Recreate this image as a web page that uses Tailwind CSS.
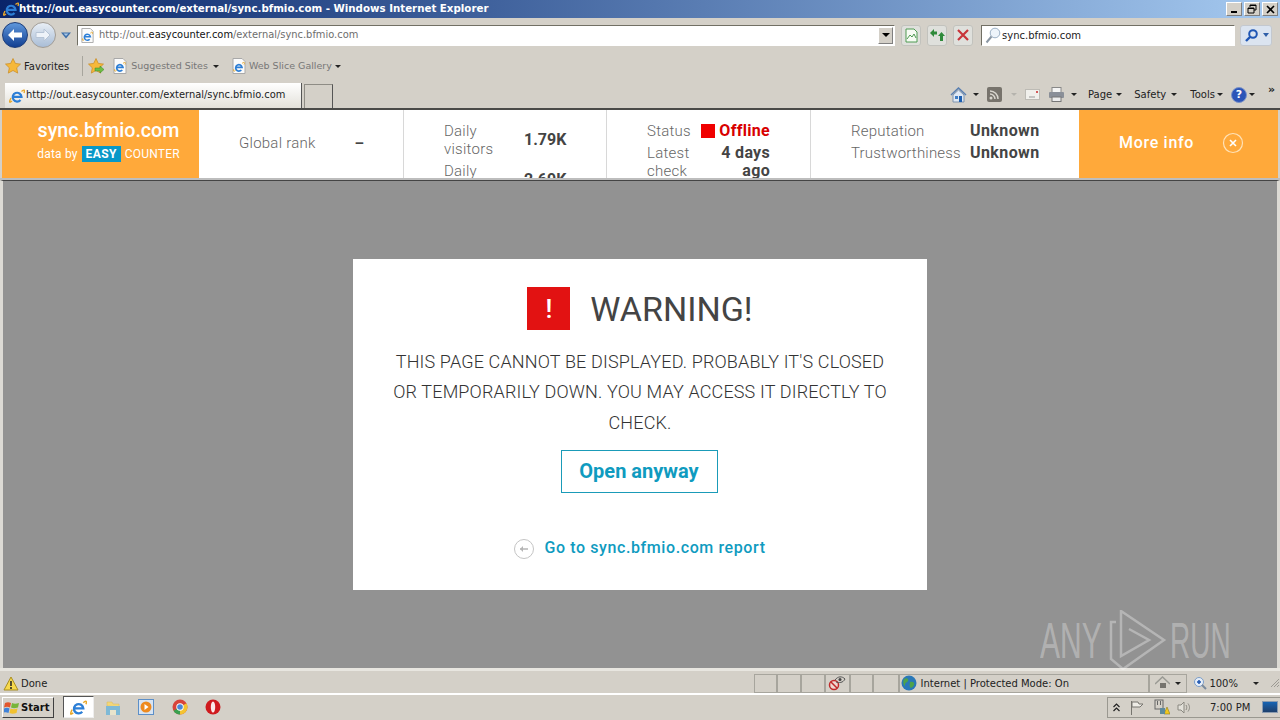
<!DOCTYPE html>
<html>
<head>
<meta charset="utf-8">
<script src="https://cdn.jsdelivr.net/npm/@tailwindcss/browser@4"></script>
</head>
<body class="m-0 overflow-hidden">
<div class="relative w-[1280px] h-[720px] flex flex-col bg-[#d4d0c8] overflow-hidden font-['Liberation_Sans',sans-serif] text-[11px] text-black">

<!-- title bar -->
<div class="h-[18px] shrink-0 flex items-center bg-gradient-to-r from-[#0a246a] to-[#a6caf0] pl-[3px] pr-[2px]">
  <svg class="w-[16px] h-[16px] shrink-0" viewBox="0 0 16 16"><use href="#ie"/></svg>
  <span class="font-['DejaVu_Sans',sans-serif] font-bold text-[10.250px] text-white whitespace-nowrap">http://out.easycounter.com/external/sync.bfmio.com - Windows Internet Explorer</span>
  <div class="ml-auto flex gap-[2px]">
    <div class="w-[16px] h-[14px] bg-[#d4d0c8] border border-[#808080] border-t-white border-l-white flex items-end justify-center pb-[2px]"><div class="w-[6px] h-[2px] bg-black"></div></div>
    <div class="w-[16px] h-[14px] bg-[#d4d0c8] border border-[#808080] border-t-white border-l-white flex items-center justify-center"><svg class="w-[10px] h-[10px]" viewBox="0 0 10 10" fill="none" stroke="#000"><path d="M3 3V1h6v5H7M1 4h6v5H1z"/><path d="M3 1.500h6M1 4.500h6"/></svg></div>
    <div class="w-[16px] h-[14px] bg-[#d4d0c8] border border-[#808080] border-t-white border-l-white flex items-center justify-center"><svg class="w-[9px] h-[9px]" viewBox="0 0 9 9" stroke="#000" stroke-width="1.600"><path d="M1 1l7 7M8 1L1 8"/></svg></div>
  </div>
</div>

<!-- address row -->
<div class="h-[32px] shrink-0 flex items-center pt-[2px]">
  <div class="ml-[2px] w-[26px] h-[26px] rounded-full bg-gradient-to-b from-[#5f97dc] to-[#123f92] border border-[#1c3c78] flex items-center justify-center">
    <svg class="w-[16px] h-[14px]" viewBox="0 0 16 14"><path d="M1 7l6-6v3.500h8v5H7V13z" fill="#fff"/></svg>
  </div>
  <div class="ml-[2px] w-[26px] h-[26px] rounded-full bg-gradient-to-b from-[#e8eef5] to-[#a9bdd6] border border-[#a29d96] flex items-center justify-center">
    <svg class="w-[16px] h-[14px]" viewBox="0 0 16 14"><path d="M15 7L9 1v3.500H1v5h8V13z" fill="#eef3f9" stroke="#b6c4d6"/></svg>
  </div>
  <svg class="ml-[5px] w-[10px] h-[7px]" viewBox="0 0 10 7"><path d="M0 .5h10L5 6.500z" fill="#3d6ea8"/><path d="M2.500 1.500h5L5 4z" fill="#a9c8e8"/></svg>
  <div class="ml-[6px] w-[818px] h-[21px] bg-white border border-[#716f64] border-r-white border-b-white flex items-center relative">
    <div class="w-[18px] h-[17px] shrink-0 flex items-center justify-center"><svg class="w-[15px] h-[15px]" viewBox="0 0 16 16"><use href="#iepage"/></svg></div>
    <span class="ml-[3px] mt-[1px] font-['DejaVu_Sans',sans-serif] text-[9.900px] text-[#6d6d6d] whitespace-nowrap">http://out.<span class="text-[#111]">easycounter.com</span>/external/sync.bfmio.com</span>
    <div class="ml-auto mr-[1px] w-[15px] h-[17px] bg-[#d4d0c8] border border-[#808080] border-t-white border-l-white flex items-center justify-center"><div class="w-0 h-0 border-x-[4px] border-x-transparent border-t-[4px] border-t-black"></div></div>
  </div>
  <div class="ml-[6px] w-[20px] h-[21px] rounded-[3px] bg-[#dfe0dc] border border-[#c2c2bd] flex items-center justify-center"><svg class="w-[13px] h-[15px]" viewBox="0 0 13 15" fill="#f6fbf3" stroke="#4e9a52"><path d="M1 1h8l3 3v10H1z"/><path d="M2 11l3-4 2 2 2-3 2 4" fill="none"/></svg></div>
  <div class="ml-[6px] w-[20px] h-[21px] rounded-[3px] bg-[#dfe0dc] border border-[#c2c2bd] flex items-center justify-center"><svg class="w-[15px] h-[13px]" viewBox="0 0 15 13" fill="#2f8a3a"><path d="M0 4l4-4v2.500h3v3H4V8z"/><path d="M15 7l-3.500-4L8 7h2v5h3V7z"/></svg></div>
  <div class="ml-[6px] w-[20px] h-[21px] rounded-[3px] bg-[#dfe0dc] border border-[#c2c2bd] flex items-center justify-center"><svg class="w-[12px] h-[12px]" viewBox="0 0 12 12" stroke="#c8343a" stroke-width="2.200"><path d="M1 1l10 10M11 1L1 11"/></svg></div>
  <div class="ml-[8px] w-[254px] h-[21px] bg-white border border-[#716f64] border-r-white border-b-white flex items-center">
    <svg class="ml-[3px] w-[16px] h-[17px]" viewBox="0 0 16 17" fill="none"><circle cx="10" cy="6" r="4.800" fill="#eef4fa" stroke="#9db1c6"/><path d="M6.500 9.500L1.500 15.500" stroke="#8b97a4" stroke-width="2"/></svg>
    <span class="ml-[1px] mt-[1px] font-['DejaVu_Sans',sans-serif] text-[10px] text-[#222] whitespace-nowrap">sync.bfmio.com</span>
  </div>
  <div class="ml-[5px] w-[32px] h-[21px] rounded-[3px] bg-[#dbe4f0] border border-[#c3c8cf] flex items-center">
    <svg class="ml-[3px] w-[15px] h-[15px]" viewBox="0 0 15 15" fill="none"><circle cx="9" cy="6" r="3.800" stroke="#1f56b4" stroke-width="2"/><path d="M6 9l-4 4" stroke="#1f56b4" stroke-width="2.400"/></svg>
    <svg class="ml-[4px] w-[6px] h-[4px]" viewBox="0 0 6 4"><path d="M0 0h6L3 4z" fill="#2f5fa8"/></svg>
  </div>
</div>

<!-- favorites row -->
<div class="h-[33px] shrink-0 flex items-center pt-[1px] pb-[2px]">
  <svg class="ml-[5px] w-[16px] h-[16px]" viewBox="0 0 16 16"><use href="#star"/></svg>
  <span class="ml-[3px] font-['DejaVu_Sans',sans-serif] text-[10px] text-[#222]">Favorites</span>
  <div class="ml-[13px] w-px h-[20px] bg-[#a7a59d]"></div>
  <div class="ml-[5px] relative w-[17px] h-[16px]"><svg class="w-[17px] h-[16px]" viewBox="0 0 17 16"><use href="#star"/><path d="M7 10h5V8l4 3.500-4 3.500v-2H7z" fill="#6ebd44" stroke="#3e8a25" stroke-width=".5"/></svg></div>
  <svg class="ml-[7px] w-[16px] h-[16px]" viewBox="0 0 16 16"><use href="#iepage"/></svg>
  <span class="ml-[3px] font-['DejaVu_Sans',sans-serif] text-[9.500px] text-[#777]">Suggested Sites</span>
  <div class="ml-[5px] w-0 h-0 border-x-[3px] border-x-transparent border-t-[3px] border-t-[#222]"></div>
  <svg class="ml-[12px] w-[16px] h-[16px]" viewBox="0 0 16 16"><use href="#iepage"/></svg>
  <span class="ml-[2px] font-['DejaVu_Sans',sans-serif] text-[9.500px] text-[#777]">Web Slice Gallery</span>
  <div class="ml-[3px] w-0 h-0 border-x-[3px] border-x-transparent border-t-[3px] border-t-[#222]"></div>
</div>

<!-- tabs row -->
<div class="h-[25px] shrink-0 flex items-stretch">
  <div class="ml-[5px] w-[297px] bg-gradient-to-b from-white to-[#e3e1da] flex items-center border-r border-[#555]">
    <svg class="ml-[4px] w-[16px] h-[16px]" viewBox="0 0 16 16"><use href="#ie"/></svg>
    <span class="ml-[1px] font-['DejaVu_Sans',sans-serif] text-[9.900px] text-[#222] whitespace-nowrap">http://out.easycounter.com/external/sync.bfmio.com</span>
  </div>
  <div class="ml-[2px] mt-[1px] w-[29px] border border-b-0 border-[#8e8c85] border-r-[#555]"></div>
  <div class="ml-auto flex items-center pb-[2px] font-['DejaVu_Sans',sans-serif] text-[10px] text-[#222] pr-[5px]">
    <svg class="w-[17px] h-[16px]" viewBox="0 0 17 16"><path d="M1 8l7.500-7L16 8" fill="none" stroke="#5a7fb0" stroke-width="1.500"/><path d="M3 8v7h11V8L8.500 3z" fill="#dfe8f4" stroke="#7e94ad"/><rect x="9" y="9" width="3" height="6" fill="#1d5fb0"/><rect x="5" y="9" width="3" height="3" fill="#3f7dc4"/></svg>
    <div class="ml-[6px] w-0 h-0 border-x-[3px] border-x-transparent border-t-[3px] border-t-[#222]"></div>
    <svg class="ml-[8px] w-[15px] h-[15px]" viewBox="0 0 15 15"><rect width="15" height="15" rx="2" fill="#77736c"/><circle cx="4" cy="11" r="1.500" fill="#d9d6cf"/><path d="M3 7a5 5 0 015 5M3 4a8 8 0 018 8" stroke="#d9d6cf" stroke-width="1.500" fill="none"/></svg>
    <div class="ml-[9px] w-0 h-0 border-x-[3px] border-x-transparent border-t-[3px] border-t-[#b5b3ad]"></div>
    <svg class="ml-[8px] w-[15px] h-[11px]" viewBox="0 0 15 11"><rect x=".5" y=".5" width="14" height="10" fill="#f1f0ec" stroke="#bdbbb5"/><rect x="11" y="2" width="2" height="2" fill="#d45a5a"/><path d="M4 8h6" stroke="#999"/></svg>
    <svg class="ml-[8px] w-[17px] h-[15px]" viewBox="0 0 17 15"><rect x="4" y="0.500" width="9" height="5" fill="#f5f5f5" stroke="#888"/><rect x="1" y="5" width="15" height="6" rx="1" fill="#8a8f98"/><rect x="4" y="10" width="9" height="4.500" fill="#eee" stroke="#777"/></svg>
    <div class="ml-[6px] w-0 h-0 border-x-[3px] border-x-transparent border-t-[3px] border-t-[#222]"></div>
    <span class="ml-[11px]">Page</span><div class="ml-[4px] w-0 h-0 border-x-[3px] border-x-transparent border-t-[3px] border-t-[#222]"></div>
    <span class="ml-[12px]">Safety</span><div class="ml-[5px] w-0 h-0 border-x-[3px] border-x-transparent border-t-[3px] border-t-[#222]"></div>
    <span class="ml-[13px]">Tools</span><div class="ml-[2px] w-0 h-0 border-x-[3px] border-x-transparent border-t-[3px] border-t-[#222]"></div>
    <div class="ml-[8px] w-[16px] h-[16px] rounded-full bg-[#2c55b8] border border-[#7c93c8] flex items-center justify-center text-[11px] font-bold text-white leading-none">?</div>
    <div class="ml-[2px] w-0 h-0 border-x-[3px] border-x-transparent border-t-[3px] border-t-[#222]"></div>
    <span class="ml-[13px] -mt-[11px] text-[11px] font-bold leading-none">»</span>
  </div>
</div>

<!-- dark edge -->
<div class="h-[2px] shrink-0 bg-[#4a4a48]"></div>

<!-- counter banner -->
<div class="h-[68px] shrink-0 ml-[2px] mr-[2px] bg-white flex items-stretch overflow-hidden font-['Roboto',sans-serif] text-[#808080]">
  <div class="w-[197px] shrink-0 bg-[#ffa93a] text-white flex flex-col items-center justify-start pt-[10px] pl-[16px]">
    <div class="text-[19.700px] font-medium leading-[22px] whitespace-nowrap">sync.bfmio.com</div>
    <div class="text-[12px] leading-[16px] mt-[4px] flex items-center whitespace-nowrap tracking-[0.2px]">data by<span class="ml-[4px] mr-[4px] w-[39px] text-center bg-[#0898c8] font-bold tracking-[0.4px] text-[12px] leading-[16px]">EASY</span>COUNTER</div>
  </div>
  <div class="w-[205px] shrink-0 border-r border-[#d8d8d8] flex items-center pb-[2px] text-[15px]">
    <span class="ml-[40px] font-light tracking-[0.25px] text-[#666]">Global rank</span>
    <span class="ml-[39px] font-bold text-[#444]">–</span>
  </div>
  <div class="w-[203px] shrink-0 border-r border-[#d8d8d8] pl-[40px] pt-[12px] text-[15px] leading-[18px]">
    <div class="flex items-center"><span class="w-[80px] font-light tracking-[0.25px] text-[#666]">Daily<br>visitors</span><span class="text-[16px] font-bold text-[#444]">1.79K</span></div>
    <div class="flex items-center mt-[4px]"><span class="w-[80px] font-light tracking-[0.25px] text-[#666]">Daily<br>pageviews</span><span class="text-[16px] font-bold text-[#444]">2.69K</span></div>
  </div>
  <div class="w-[204px] shrink-0 border-r border-[#d8d8d8] pl-[40px] pt-[12px] text-[15px] leading-[18px]">
    <div class="flex items-center w-[123px] justify-between"><span class="font-light tracking-[0.25px] text-[#666]">Status</span><span class="flex items-center text-[16px] font-bold tracking-[0.3px] text-[#d80000]"><span class="w-[14px] h-[14px] bg-[#f00000] mr-[4px]"></span>Offline</span></div>
    <div class="flex w-[123px] justify-between mt-[4px]"><span class="font-light tracking-[0.25px] text-[#666]">Latest<br>check</span><span class="text-[16px] font-bold tracking-[0.3px] text-[#444] text-right">4 days<br>ago</span></div>
  </div>
  <div class="w-[268px] shrink-0 pl-[40px] pt-[12px] text-[15px] leading-[18px]">
    <div class="flex"><span class="w-[119px] font-light tracking-[0.2px] text-[#666]">Reputation</span><span class="text-[16px] font-bold tracking-[0.4px] text-[#444]">Unknown</span></div>
    <div class="flex mt-[4px]"><span class="w-[119px] font-light tracking-[0.2px] text-[#666]">Trustworthiness</span><span class="text-[16px] font-bold tracking-[0.4px] text-[#444]">Unknown</span></div>
  </div>
  <div class="flex-1 bg-[#ffa93a] text-white flex items-center pb-[2px]">
    <span class="ml-[40px] text-[16px] font-medium tracking-[0.7px]">More info</span>
    <svg class="ml-[28px] w-[22px] h-[22px]" viewBox="0 0 22 22" fill="none"><circle cx="11" cy="11" r="9.500" stroke="#ffe2b8" stroke-width="1.200"/><path d="M8 8l6 6M14 8l-6 6" stroke="#fff" stroke-width="1.600"/></svg>
  </div>
</div>

<!-- separator -->
<div class="h-[2px] shrink-0 bg-[#bdbdbd]"></div>

<!-- page -->
<div class="flex-1 min-h-0 border-l-[3px] border-r-[3px] border-t border-l-[#dcdad4] border-r-[#dcdad4] border-t-[#444] bg-[#929292] flex items-start justify-center pt-[78px]">
  <div class="w-[574px] h-[331px] bg-white flex flex-col items-center font-['Roboto',sans-serif] text-[#444]">
    <div class="mt-[27px] flex items-center">
      <div class="w-[43px] h-[43px] bg-[#e21212] flex items-center justify-center text-white text-[26px] font-medium leading-none">!</div>
      <div class="ml-[20px] pt-[2px] text-[34px] leading-[43px]">WARNING!</div>
    </div>
    <p class="mt-[15.500px] w-[505px] text-center text-[18px] font-light tracking-[0.15px] leading-[30.500px] text-[#333]">THIS PAGE CANNOT BE DISPLAYED. PROBABLY IT'S CLOSED OR TEMPORARILY DOWN. YOU MAY ACCESS IT DIRECTLY TO CHECK.</p>
    <div class="mt-[12px] mr-[2px] w-[157px] h-[43px] border border-[#1a9bb8] flex items-center justify-center pb-[2px] text-[#0f9bbf] text-[20px] font-bold">Open anyway</div>
    <div class="mt-[43px] flex items-center">
      <svg class="w-[20px] h-[20px]" viewBox="0 0 20 20" fill="none"><circle cx="10" cy="10" r="9.500" stroke="#c4c4c4"/><path d="M6 10h8" stroke="#b5b5b5" stroke-width="1.500"/><path d="M9 7l-3 3 3 3z" fill="#b5b5b5"/></svg>
      <span class="ml-[10px] pb-[1px] text-[16px] font-medium tracking-[0.6px] text-[#0f9bbf]">Go to sync.bfmio.com report</span>
    </div>
  </div>
</div>

<!-- status bar -->
<div class="h-[27px] shrink-0 border-t-[3px] border-b-[2px] border-t-[#e8e6e0] border-b-white bg-[#d4d0c8] flex items-center pt-[2px]">
  <svg class="ml-[3px] w-[16px] h-[15px]" viewBox="0 0 16 15"><path d="M8 1l7 13H1z" fill="#f7d94c" stroke="#a88d1e"/><path d="M8 5v5M8 11v2" stroke="#222" stroke-width="1.500"/></svg>
  <span class="ml-[2px] w-[733px] font-['DejaVu_Sans',sans-serif] text-[10px] text-[#222]">Done</span>
  <div class="w-[23px] h-[19px] border border-[#a7a59d]"></div>
  <div class="w-[24px] h-[19px] border border-[#a7a59d]"></div>
  <div class="w-[24px] h-[19px] border border-[#a7a59d]"></div>
  <div class="w-[25px] h-[19px] border border-[#a7a59d] flex items-center justify-center"><svg class="w-[18px] h-[16px]" viewBox="0 0 18 16" fill="none"><circle cx="6" cy="10" r="4.500" fill="#f0d8d0" stroke="#c02a2a" stroke-width="1.500"/><path d="M3 7l6 6" stroke="#c02a2a" stroke-width="1.500"/><path d="M7 5c3-4 7-4 10-1-2 4-6 4-9 3" stroke="#555"/><circle cx="12" cy="4.500" r="1.500" fill="#444"/></svg></div>
  <div class="w-[23px] h-[19px] border border-[#a7a59d]"></div>
  <div class="w-[26px] h-[19px] border border-[#a7a59d]"></div>
  <div class="w-[251px] h-[19px] border border-[#a7a59d] flex items-center font-['DejaVu_Sans',sans-serif] text-[10px] text-[#222] whitespace-nowrap">
    <svg class="ml-[1px] w-[16px] h-[16px]" viewBox="0 0 16 16"><circle cx="8" cy="8" r="7.500" fill="#2a78b8"/><path d="M3 4c3-2 5 0 4 2s-3 1-3 4-3-2-1-6zM9 7c3-1 5 1 4 3s-3 4-4 2 0-3 0-5z" fill="#4fa34a"/></svg>
    <span class="ml-[4px]">Internet | Protected Mode: On</span>
  </div>
  <div class="w-[38px] h-[19px] border border-[#a7a59d] flex items-center">
    <svg class="ml-[5px] w-[15px] h-[15px]" viewBox="0 0 15 15"><path d="M0 8l7.500-7L15 8" fill="none" stroke="#9a9a94" stroke-width="1.500"/><rect x="5" y="7" width="6" height="5" fill="#76746e"/></svg>
    <div class="ml-[5px] w-0 h-0 border-x-[3px] border-x-transparent border-t-[3px] border-t-[#222]"></div>
  </div>
  <div class="flex-1 h-[19px] flex items-center font-['DejaVu_Sans',sans-serif] text-[10px] text-[#222] relative">
    <svg class="ml-[6px] w-[15px] h-[15px]" viewBox="0 0 15 15" fill="none"><circle cx="6" cy="6" r="4.500" fill="#e6eef8" stroke="#7a9cc8"/><path d="M4 6h4M6 4v4" stroke="#1e55b0" stroke-width="1.500"/><path d="M9 9l4 4" stroke="#7a8a9c" stroke-width="2"/></svg>
    <span class="ml-[1px]">100%</span>
    <div class="ml-[15px] w-0 h-0 border-x-[3px] border-x-transparent border-t-[3px] border-t-[#222]"></div>
    <svg class="ml-[11px] w-[10px] h-[10px]" viewBox="0 0 10 10" stroke="#9c9a93"><path d="M9 1L1 9M9 4L4 9M9 7L7 9"/></svg>
  </div>
</div>

<!-- taskbar -->
<div class="h-[25px] shrink-0 bg-[#d4d0c8] flex items-center pb-[1px]">
  <div class="ml-[2px] w-[52px] h-[21px] bg-[#d4d0c8] border border-[#404040] border-t-white border-l-white flex items-center">
    <svg class="ml-[1px] w-[16px] h-[15px]" viewBox="0 0 16 15"><path d="M1 3c2-1 4-1 6 0l-1 4.500c-2-1-4-1-6 0z" fill="#e2562c"/><path d="M8 3c2 1 4 1 7 0l-1 4.500c-3 1-5 1-7 0z" fill="#77b53a"/><path d="M0 8.500c2-1 4-1 5.500 0L4.500 13c-2-1-4-1-5.500 0z" fill="#3f82d8"/><path d="M6.500 8.500c2 1 4 1 7 0L12.500 13c-3 1-5 1-7 0z" fill="#f1c12f"/></svg>
    <span class="ml-[1px] font-['DejaVu_Sans',sans-serif] font-bold text-[10px] text-[#111]">Start</span>
  </div>
  <div class="ml-[9px] w-[31px] h-[22px] bg-white border border-[#555] border-r-[#eee] border-b-[#eee] flex items-center justify-center"><svg class="w-[17px] h-[17px]" viewBox="0 0 16 16"><use href="#ie"/></svg></div>
  <svg class="ml-[11px] w-[16px] h-[17px]" viewBox="0 0 16 17"><path d="M2 7V3h5l1 2h6v3z" fill="#f2d679" stroke="#d9b858" stroke-width=".5"/><path d="M1 7h14v9H1z" fill="#7fb9d6"/><path d="M5 16v-5h6v5z" fill="#e9e4cc"/></svg>
  <svg class="ml-[17px] w-[16px] h-[16px]" viewBox="0 0 16 16"><rect x=".5" y=".5" width="15" height="15" fill="#d8e4f2" stroke="#5c8fc8"/><circle cx="8" cy="8" r="5.500" fill="#ee8a1f"/><path d="M6.500 5l4 3-4 3z" fill="#fff"/></svg>
  <svg class="ml-[18px] w-[16px] h-[16px]" viewBox="0 0 16 16"><circle cx="8" cy="8" r="7.500" fill="#d8443a"/><path d="M8 8L1.500 11.700A7.500 7.500 0 008 15.500z" fill="#38a04f"/><path d="M8 8l6.500-3.700a7.500 7.500 0 01-6.500 11.200z" fill="#f4c431"/><circle cx="8" cy="8" r="3.700" fill="#fff"/><circle cx="8" cy="8" r="2.800" fill="#4a87d8"/></svg>
  <svg class="ml-[17px] w-[16px] h-[16px]" viewBox="0 0 16 16"><circle cx="8" cy="8" r="7.500" fill="#cf1a1e"/><ellipse cx="8" cy="8" rx="2.200" ry="5.500" fill="#fbe9e9"/></svg>
  <div class="ml-auto mr-0 w-[173px] h-[21px] border border-[#9a9890] border-r-0 flex items-center">
    <svg class="ml-[5px] w-[7px] h-[9px]" viewBox="0 0 7 9" fill="none" stroke="#222" stroke-width="1.200"><path d="M.5 4L3.500 1l3 3M.5 8l3-3 3 3"/></svg>
    <svg class="ml-[10px] w-[15px] h-[15px]" viewBox="0 0 15 15" fill="#eeece6" stroke="#77756f"><path d="M1.500 1v14"/><path d="M2 2h6l1 2h4l-3 3 0 0H7L6 7H2z"/></svg>
    <svg class="ml-[9px] w-[16px] h-[16px]" viewBox="0 0 16 16"><rect x="1" y="1" width="8" height="9" fill="none" stroke="#666"/><rect x="3" y="2" width="1" height="4" fill="#666"/><rect x="6" y="2" width="1" height="4" fill="#666"/><path d="M10 15l3-7 3 7z" fill="#f1c81e" stroke="#8c7a1c" stroke-width=".6"/><rect x="6" y="9" width="5" height="6" fill="#5e8a9c"/></svg>
    <svg class="ml-[7px] w-[15px] h-[15px]" viewBox="0 0 15 15" fill="none" stroke="#8a8880"><path d="M1 5h3l3-3v11l-3-3H1z" fill="#e3e1da"/><path d="M9 5c1 2 1 3 0 5M11 3.500c2 3 2 5 0 8"/></svg>
    <span class="ml-[18px] font-['DejaVu_Sans',sans-serif] text-[10px] text-[#222]">7:00 PM</span>
    <div class="ml-auto mr-[2px] w-[16px] h-[12px] bg-gradient-to-b from-[#1464b4] to-[#1c3f6c] border border-[#8a9bb0]"></div>
  </div>
</div>

<!-- ANY RUN watermark -->
<div class="absolute left-[1040px] top-[610px] w-[194px] h-[60px] pointer-events-none font-['Liberation_Sans',sans-serif] font-normal text-white/30">
  <span class="absolute left-0 top-[7px] text-[50px] leading-[48px] origin-left scale-x-[0.6] whitespace-nowrap">ANY</span>
  <svg class="absolute left-[69px] top-0 w-[60px] h-[60px]" viewBox="0 0 60 60" fill="none" stroke="#fff" stroke-opacity=".32" stroke-width="2.500"><path d="M7 12H2v37l12 10 41-29L12 1v45l28-16-20-11"/></svg>
  <span class="absolute left-[130px] top-[7px] text-[50px] leading-[48px] origin-left scale-x-[0.56] whitespace-nowrap">RUN</span>
</div>

<!-- icon defs -->
<svg class="hidden" width="0" height="0">
  <defs>
    <g id="ie">
      <path d="M3.800 8.800h8.700A4.400 4.400 0 1 0 11.500 12" fill="none" stroke="#2d7fd6" stroke-width="2.200"/>
      <path d="M12.500 3.500C15 1 16 2 15 5M3 13C0 15.500 0 14 2 10" fill="none" stroke="#e8a82a" stroke-width="1.400"/>
    </g>
    <g id="iepage">
      <path d="M2 .5h9l3 3V15.500H2z" fill="#fbfbfb" stroke="#a9a9a9"/>
      <path d="M5 9.300h6A3.200 3.200 0 1 0 10.300 12" fill="none" stroke="#2d7fd6" stroke-width="1.700"/>
      <path d="M11 5.500c2-2 3-1 2 1M4.500 12.500c-2 1.500-2.500 0-1.500-1.500" fill="none" stroke="#e8a82a"/>
    </g>
    <path id="star" d="M8 .5l2.300 4.900 5.200.7-3.800 3.700 1 5.300L8 12.500l-4.700 2.600 1-5.300L.5 6.100l5.200-.7z" fill="#f6b83a" stroke="#c98a1e" stroke-width=".7"/>
  </defs>
</svg>
</div>
</body>
</html>
